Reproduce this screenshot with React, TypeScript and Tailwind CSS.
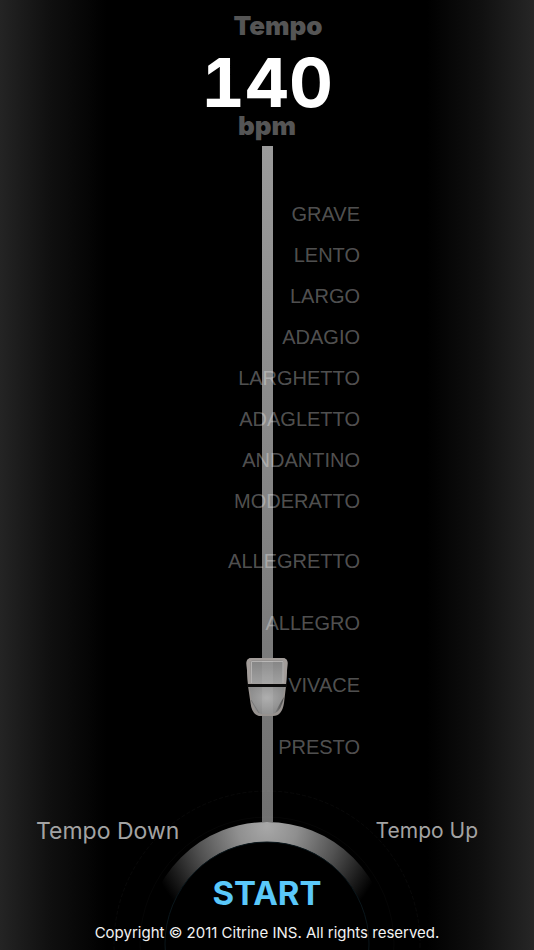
import React, { useState } from 'react';
import clsx from 'clsx';

const MIN_TEMPO = 20;
const MAX_TEMPO = 170;

const SLOW_MARKS = ['GRAVE', 'LENTO', 'LARGO', 'ADAGIO', 'LARGHETTO', 'ADAGLETTO', 'ANDANTINO', 'MODERATTO'];
const FAST_MARKS = ['ALLEGRETTO', 'ALLEGRO', 'VIVACE', 'PRESTO'];

function SliderKnob() {
  return (
    <svg viewBox="0 0 42 60" className="block w-[42px] h-[60px]" aria-hidden="true">
      <defs>
        <linearGradient id="knobTop" x1="0" y1="0" x2="0" y2="1">
          <stop offset="0" stopColor="#858585" />
          <stop offset="1" stopColor="#a0a0a0" />
        </linearGradient>
        <radialGradient id="knobBottom" cx="0.5" cy="0.4" r="0.7">
          <stop offset="0" stopColor="#a8a8a8" />
          <stop offset="1" stopColor="#848484" />
        </radialGradient>
        <linearGradient id="knobShade" x1="0" y1="0" x2="1" y2="0">
          <stop offset="0" stopColor="#4a4a4a" stopOpacity="0.2" />
          <stop offset="1" stopColor="#4a4a4a" />
        </linearGradient>
      </defs>
      <path
        d="M6 1H36Q41.500 1 41.500 6L40 29L38 46Q36 59 27 59H15Q6 59 4.500 46L2 29L.5 6Q.5 1 6 1Z"
        fill="#97928f"
      />
      <path d="M6 1H36Q41.500 1 41.500 6L40 27H2L.5 6Q.5 1 6 1Z" fill="#a39d9a" />
      <rect x="4.500" y="3.500" width="33" height="23" rx="1.500" fill="url(#knobTop)" />
      <path d="M5.500 26V4.500H37V26" fill="none" stroke="#b4b2b1" />
      <path d="M3.500 30H38.500L36 45Q34 56 26 57H16Q9 56 6 45Z" fill="url(#knobBottom)" />
      <path d="M38 40Q35 44 29 56Q35 54 38 40Z" fill="url(#knobShade)" />
      <path d="M5 43Q8 48 13 56" fill="none" stroke="#787878" />
      <rect x="16" y="4" width="11" height="53" fill="#fff" opacity="0.08" />
      <rect x="1" y="27" width="40" height="3" fill="#0b0b0b" />
    </svg>
  );
}

function Dial() {
  return (
    <svg viewBox="0 0 320 160" className="block w-[320px] h-[160px]" aria-hidden="true">
      <defs>
        <radialGradient id="ringGlow" gradientUnits="userSpaceOnUse" cx="160" cy="36" r="120">
          <stop offset="0" stopColor="#a8a8a8" />
          <stop offset="0.25" stopColor="#8f8f8f" />
          <stop offset="0.6" stopColor="#515151" />
          <stop offset="0.85" stopColor="#1d1d1d" />
          <stop offset="1" stopColor="#000" />
        </radialGradient>
      </defs>
      <circle cx="160" cy="154" r="153" fill="none" stroke="#fff" strokeOpacity="0.035" strokeDasharray="4 2" />
      <circle cx="160" cy="154" r="127" fill="none" stroke="#fff" strokeOpacity="0.025" />
      <circle cx="160" cy="154" r="122" fill="#000" />
      <circle cx="160" cy="154" r="112" fill="none" stroke="url(#ringGlow)" strokeWidth="20" />
      <circle cx="160" cy="154" r="102" fill="#000" stroke="#0a161b" />
    </svg>
  );
}

export default function App() {
  const [tempo, setTempo] = useState(140);
  const [running, setRunning] = useState(false);

  const changeTempo = (step: number) => {
    setTempo(prev => Math.min(MAX_TEMPO, Math.max(MIN_TEMPO, prev + step)));
  };

  const position = ((tempo - MIN_TEMPO) / (MAX_TEMPO - MIN_TEMPO)) * 100;

  return (
    <main className="min-h-screen flex flex-col overflow-hidden bg-black bg-[linear-gradient(to_right,#242424_0%,#101010_9%,#000_20%,#000_80%,#101010_90%,#262626_100%)] font-['Inter',sans-serif]">
      <header className="h-[146px] pt-3 flex flex-col items-center">
        <label
          htmlFor="tempo"
          className="pl-[22px] text-[26px] leading-7 font-black text-[#555]"
        >
          Tempo
        </label>
        <output
          htmlFor="tempo"
          className="mt-3 text-[68px] leading-[60px] font-bold tabular-nums text-white"
        >
          {tempo}
        </output>
        <span className="text-[26px] leading-7 font-black text-[#555]">bpm</span>
      </header>

      <section className="flex-1 grid justify-items-center">
        <div className="relative col-start-1 row-start-1 w-[11px] bg-linear-to-b from-[#9b9b9b] to-[#707070]">
          <div
            className="absolute left-1/2 -translate-x-1/2 -translate-y-1/2 w-[42px]"
            style={{ top: `${position}%` }}
          >
            <SliderKnob />
          </div>
        </div>
        <ul className="relative col-start-1 row-start-1 w-[186px] pt-12 pb-10 text-right text-xl text-white/32 font-['Liberation_Sans',Arial,sans-serif]">
          {SLOW_MARKS.map(mark => (
            <li key={mark} className="leading-[41px]">{mark}</li>
          ))}
          {FAST_MARKS.map((mark, index) => (
            <li key={mark} className={clsx('leading-[62px]', index === 0 && 'mt-2')}>{mark}</li>
          ))}
        </ul>
        <input
          id="tempo"
          type="range"
          min={MIN_TEMPO}
          max={MAX_TEMPO}
          value={tempo}
          onChange={e => setTempo(Number(e.target.value))}
          className="relative col-start-1 row-start-1 w-[42px] h-full opacity-0 cursor-pointer [writing-mode:vertical-lr]"
        />
      </section>

      <footer className="relative h-32 flex flex-col">
        <div className="absolute bottom-0 left-1/2 -translate-x-1/2">
          <Dial />
        </div>
        <div className="relative -mt-[7px] pl-9 pr-14 flex items-center justify-between text-[#a3a3a3]">
          <button onClick={() => changeTempo(-1)} className="text-[23px] leading-8 cursor-pointer">
            Tempo Down
          </button>
          <button onClick={() => changeTempo(1)} className="text-[21px] leading-8 cursor-pointer">
            Tempo Up
          </button>
        </div>
        <button
          onClick={() => setRunning(!running)}
          className="relative mt-[26px] self-center text-[33px] leading-10 font-bold text-[#5ac8fa] cursor-pointer"
        >
          {running ? 'STOP' : 'START'}
        </button>
        <small className="relative mt-2 self-center whitespace-nowrap text-[15px] leading-6 text-[#f2f2f2]">
          Copyright © 2011 Citrine INS. All rights reserved.
        </small>
      </footer>
    </main>
  );
}
